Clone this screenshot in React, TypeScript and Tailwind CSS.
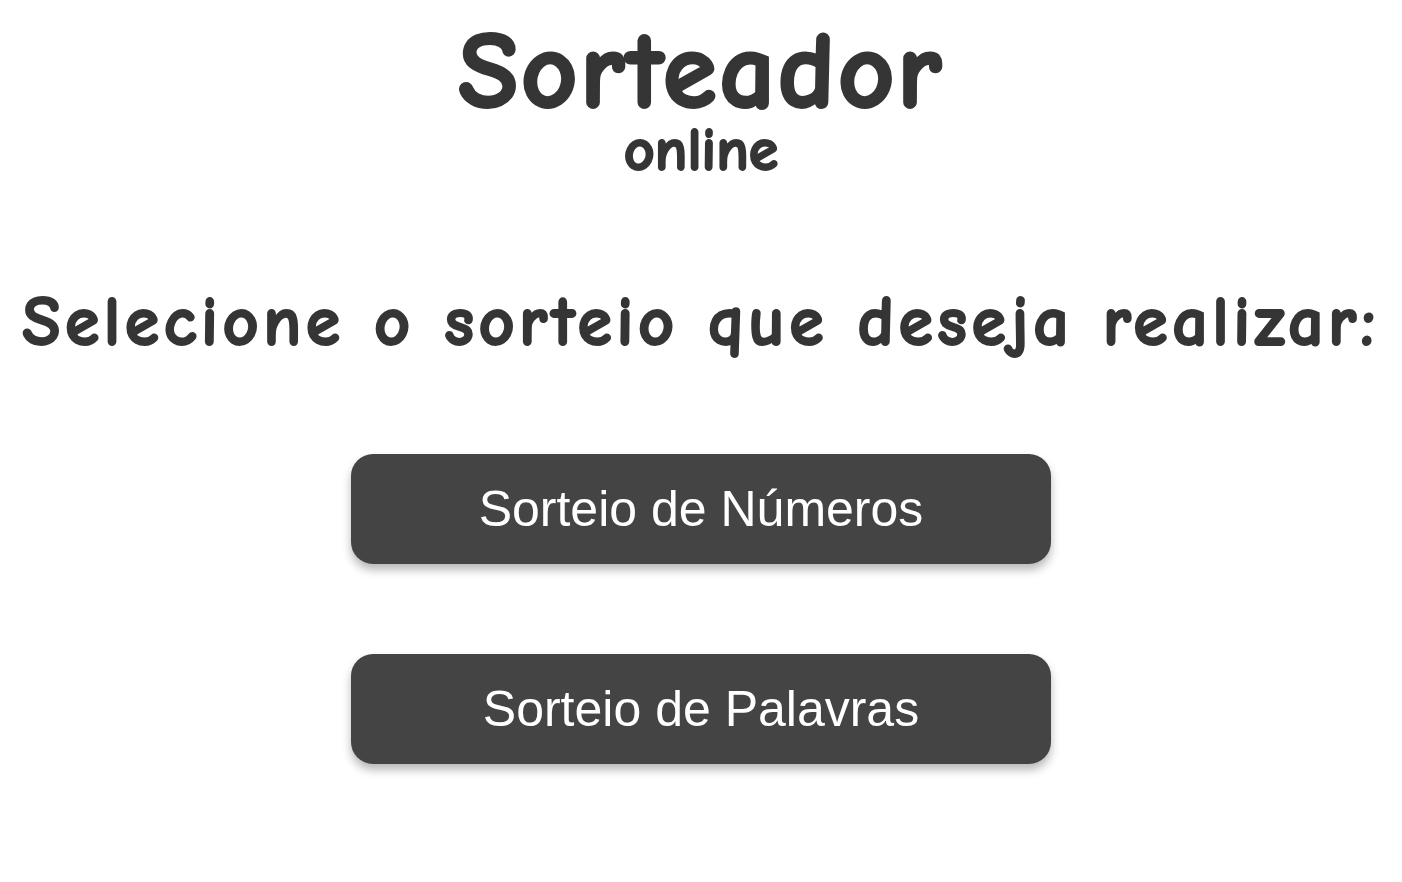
export default function App() {
  const comic = "font-['Comic_Sans_MS','Comic_Neue','DejaVu_Sans',sans-serif] font-bold";
  const btn =
    "w-[700px] h-[110px] rounded-[22px] bg-[#444444] text-white text-[50px] font-['Liberation_Sans',Arial,sans-serif] shadow-[0_6px_10px_rgba(0,0,0,0.28)]";
  return (
    <div className="min-h-[882px] bg-white flex flex-col items-center text-[#353535]">
      <h1 className={`${comic} mt-[22px] text-[110px] leading-[100px] tracking-[2.5px] [-webkit-text-stroke:3px_#353535]`}>Sorteador</h1>
      <p className={`${comic} mt-[4px] text-[60px] leading-[50px] [-webkit-text-stroke:2px_#353535]`}>online</p>
      <h2 className={`${comic} mt-[112px] text-[70px] leading-[70px] tracking-[4.5px] whitespace-nowrap [-webkit-text-stroke:2px_#353535]`}>Selecione o sorteio que deseja realizar:</h2>
      <div className="mt-[96px] flex flex-col gap-[90px]">
        <button className={btn}>Sorteio de Números</button>
        <button className={btn}>Sorteio de Palavras</button>
      </div>
    </div>
  );
}
